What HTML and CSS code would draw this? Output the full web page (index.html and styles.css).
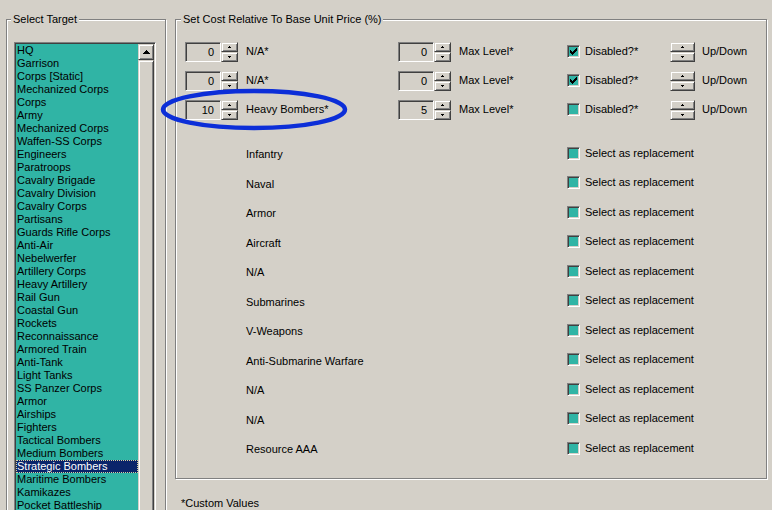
FILE: index.html
```html
<!DOCTYPE html>
<html>
<head>
<meta charset="utf-8">
<link rel="stylesheet" href="styles.css">
</head>
<body>
<div class="window">
  <fieldset class="group target">
    <legend>Select Target</legend>
    <div class="listbox">
      <ul class="items">
        <li>HQ</li><li>Garrison</li><li>Corps [Static]</li><li>Mechanized Corps</li><li>Corps</li><li>Army</li><li>Mechanized Corps</li><li>Waffen-SS Corps</li><li>Engineers</li><li>Paratroops</li><li>Cavalry Brigade</li><li>Cavalry Division</li><li>Cavalry Corps</li><li>Partisans</li><li>Guards Rifle Corps</li><li>Anti-Air</li><li>Nebelwerfer</li><li>Artillery Corps</li><li>Heavy Artillery</li><li>Rail Gun</li><li>Coastal Gun</li><li>Rockets</li><li>Reconnaissance</li><li>Armored Train</li><li>Anti-Tank</li><li>Light Tanks</li><li>SS Panzer Corps</li><li>Armor</li><li>Airships</li><li>Fighters</li><li>Tactical Bombers</li><li>Medium Bombers</li><li class="sel">Strategic Bombers</li><li>Maritime Bombers</li><li>Kamikazes</li><li>Pocket Battleship</li><li>Battleship</li>
      </ul>
      <div class="vscroll">
        <div class="sbtn"><svg width="7" height="4" viewBox="0 0 7 4" shape-rendering="crispEdges"><path d="M3 0h1v1h1v1h1v1h1v1H0V3h1V2h1V1h1z"/></svg></div>
        <div class="thumb"></div>
      </div>
    </div>
  </fieldset>

  <div class="main">
    <fieldset class="group cost">
      <legend>Set Cost Relative To Base Unit Price (%)</legend>

      <div class="upper">
        <div class="row">
          <div class="spin"><div class="edit">0</div><div class="btns"><div class="btn"><svg width="3" height="2" viewBox="0 0 3 2" shape-rendering="crispEdges"><path d="M1 0h1v1h1v1H0V1h1z"/></svg></div><div class="btn"><svg width="3" height="2" viewBox="0 0 3 2" shape-rendering="crispEdges"><path d="M0 0h3v1H2v1H1V1H0z"/></svg></div></div></div>
          <span class="lbl">N/A*</span>
          <div class="spin"><div class="edit">0</div><div class="btns"><div class="btn"><svg width="3" height="2" viewBox="0 0 3 2" shape-rendering="crispEdges"><path d="M1 0h1v1h1v1H0V1h1z"/></svg></div><div class="btn"><svg width="3" height="2" viewBox="0 0 3 2" shape-rendering="crispEdges"><path d="M0 0h3v1H2v1H1V1H0z"/></svg></div></div></div>
          <span class="lbl2">Max Level*</span>
          <div class="chkcell"><span class="chk"><svg width="7" height="7" viewBox="0 0 7 7" shape-rendering="crispEdges"><path d="M6 0h1v1h-1z M5 1h2v1h-2z M0 2h1v1h-1z M4 2h3v1h-3z M0 3h2v1h-2z M3 3h3v1h-3z M0 4h5v1h-5z M1 5h3v1h-3z M2 6h1v1h-1z"/></svg></span><span class="chklbl">Disabled?*</span></div>
          <div class="updown"><div class="btn"><svg width="3" height="2" viewBox="0 0 3 2" shape-rendering="crispEdges"><path d="M1 0h1v1h1v1H0V1h1z"/></svg></div><div class="btn"><svg width="3" height="2" viewBox="0 0 3 2" shape-rendering="crispEdges"><path d="M0 0h3v1H2v1H1V1H0z"/></svg></div></div>
          <span class="udlbl">Up/Down</span>
        </div>

        <div class="row">
          <div class="spin"><div class="edit">0</div><div class="btns"><div class="btn"><svg width="3" height="2" viewBox="0 0 3 2" shape-rendering="crispEdges"><path d="M1 0h1v1h1v1H0V1h1z"/></svg></div><div class="btn"><svg width="3" height="2" viewBox="0 0 3 2" shape-rendering="crispEdges"><path d="M0 0h3v1H2v1H1V1H0z"/></svg></div></div></div>
          <span class="lbl">N/A*</span>
          <div class="spin"><div class="edit">0</div><div class="btns"><div class="btn"><svg width="3" height="2" viewBox="0 0 3 2" shape-rendering="crispEdges"><path d="M1 0h1v1h1v1H0V1h1z"/></svg></div><div class="btn"><svg width="3" height="2" viewBox="0 0 3 2" shape-rendering="crispEdges"><path d="M0 0h3v1H2v1H1V1H0z"/></svg></div></div></div>
          <span class="lbl2">Max Level*</span>
          <div class="chkcell"><span class="chk"><svg width="7" height="7" viewBox="0 0 7 7" shape-rendering="crispEdges"><path d="M6 0h1v1h-1z M5 1h2v1h-2z M0 2h1v1h-1z M4 2h3v1h-3z M0 3h2v1h-2z M3 3h3v1h-3z M0 4h5v1h-5z M1 5h3v1h-3z M2 6h1v1h-1z"/></svg></span><span class="chklbl">Disabled?*</span></div>
          <div class="updown"><div class="btn"><svg width="3" height="2" viewBox="0 0 3 2" shape-rendering="crispEdges"><path d="M1 0h1v1h1v1H0V1h1z"/></svg></div><div class="btn"><svg width="3" height="2" viewBox="0 0 3 2" shape-rendering="crispEdges"><path d="M0 0h3v1H2v1H1V1H0z"/></svg></div></div>
          <span class="udlbl">Up/Down</span>
        </div>

        <div class="row">
          <div class="spin"><div class="edit">10</div><div class="btns"><div class="btn"><svg width="3" height="2" viewBox="0 0 3 2" shape-rendering="crispEdges"><path d="M1 0h1v1h1v1H0V1h1z"/></svg></div><div class="btn"><svg width="3" height="2" viewBox="0 0 3 2" shape-rendering="crispEdges"><path d="M0 0h3v1H2v1H1V1H0z"/></svg></div></div></div>
          <span class="lbl">Heavy Bombers*</span>
          <div class="spin"><div class="edit">5</div><div class="btns"><div class="btn"><svg width="3" height="2" viewBox="0 0 3 2" shape-rendering="crispEdges"><path d="M1 0h1v1h1v1H0V1h1z"/></svg></div><div class="btn"><svg width="3" height="2" viewBox="0 0 3 2" shape-rendering="crispEdges"><path d="M0 0h3v1H2v1H1V1H0z"/></svg></div></div></div>
          <span class="lbl2">Max Level*</span>
          <div class="chkcell"><span class="chk"></span><span class="chklbl">Disabled?*</span></div>
          <div class="updown"><div class="btn"><svg width="3" height="2" viewBox="0 0 3 2" shape-rendering="crispEdges"><path d="M1 0h1v1h1v1H0V1h1z"/></svg></div><div class="btn"><svg width="3" height="2" viewBox="0 0 3 2" shape-rendering="crispEdges"><path d="M0 0h3v1H2v1H1V1H0z"/></svg></div></div>
          <span class="udlbl">Up/Down</span>
        </div>
      </div>

      <div class="lower">
        <div class="row2"><span class="rlbl">Infantry</span><div class="chkcell"><span class="chk"></span><span class="chklbl">Select as replacement</span></div></div>
        <div class="row2"><span class="rlbl">Naval</span><div class="chkcell"><span class="chk"></span><span class="chklbl">Select as replacement</span></div></div>
        <div class="row2"><span class="rlbl">Armor</span><div class="chkcell"><span class="chk"></span><span class="chklbl">Select as replacement</span></div></div>
        <div class="row2"><span class="rlbl">Aircraft</span><div class="chkcell"><span class="chk"></span><span class="chklbl">Select as replacement</span></div></div>
        <div class="row2"><span class="rlbl">N/A</span><div class="chkcell"><span class="chk"></span><span class="chklbl">Select as replacement</span></div></div>
        <div class="row2"><span class="rlbl">Submarines</span><div class="chkcell"><span class="chk"></span><span class="chklbl">Select as replacement</span></div></div>
        <div class="row2"><span class="rlbl">V-Weapons</span><div class="chkcell"><span class="chk"></span><span class="chklbl">Select as replacement</span></div></div>
        <div class="row2"><span class="rlbl">Anti-Submarine Warfare</span><div class="chkcell"><span class="chk"></span><span class="chklbl">Select as replacement</span></div></div>
        <div class="row2"><span class="rlbl">N/A</span><div class="chkcell"><span class="chk"></span><span class="chklbl">Select as replacement</span></div></div>
        <div class="row2"><span class="rlbl">N/A</span><div class="chkcell"><span class="chk"></span><span class="chklbl">Select as replacement</span></div></div>
        <div class="row2"><span class="rlbl">Resource AAA</span><div class="chkcell"><span class="chk"></span><span class="chklbl">Select as replacement</span></div></div>
      </div>
    </fieldset>
    <div class="note">*Custom Values</div>
  </div>

  <svg class="annot" width="196" height="48" viewBox="0 0 196 48"><ellipse cx="98" cy="23.5" rx="91" ry="18.5" fill="none" stroke="#0c2ed8" stroke-width="4.5"/></svg>
</div>
</body>
</html>
```

FILE: styles.css
```css
* { box-sizing: border-box; }
html, body { margin: 0; padding: 0; }
body {
  background: #d4d0c8;
  color: #000;
  font: 11px/13px "Liberation Sans", Arial, sans-serif;
  overflow: hidden;
  width: 772px;
  height: 510px;
}
.window {
  position: relative;
  display: flex;
  align-items: flex-start;
  gap: 9px;
  padding-left: 6px;
  height: 510px;
  overflow: hidden;
}
.group {
  margin: 13px 0 0;
  padding: 0;
  min-width: 0;
  border: 1px solid #808080;
  box-shadow: inset 1px 1px 0 #fff, 1px 1px 0 #fff;
}
.group legend {
  padding: 0 2px;
  background: #d4d0c8;
  line-height: 13px;
}
.target { width: 160px; height: 620px; padding-top: 16px; flex: none; }
.target legend { margin-left: 4px; }

.listbox {
  margin-left: 7px;
  width: 142px;
  height: 580px;
  display: flex;
  padding: 1px;
  border: 1px solid;
  border-color: #808080 #fff #fff #808080;
  box-shadow: inset 1px 1px 0 #404040, inset -1px -1px 0 #d4d0c8;
}
.items {
  list-style: none;
  margin: 0;
  padding: 0;
  width: 122px;
  background: #30b4a5;
  overflow: hidden;
}
.items li { height: 13px; line-height: 13px; padding-left: 1px; white-space: nowrap; }
.items li.sel {
  background: #0a246a;
  color: #fff;
  outline: 1px dotted #d8d0a0;
  outline-offset: -1px;
}
.vscroll {
  width: 16px;
  display: flex;
  flex-direction: column;
  background: #e4e2dd;
}
.sbtn, .thumb, .btn {
  background: #d4d0c8;
  border: 1px solid;
  border-color: #d4d0c8 #404040 #404040 #d4d0c8;
  box-shadow: inset 1px 1px 0 #fff, inset -1px -1px 0 #808080;
}
.sbtn { height: 16px; display: flex; align-items: center; justify-content: center; }
.thumb { flex: 1; }

.main { display: flex; flex-direction: column; flex: none; }
.cost { width: 592px; height: 466px; padding: 11px 0 0 0; }
.cost legend { margin-left: 5px; }
.upper, .lower { padding-left: 9px; }

.row { display: flex; align-items: center; height: 29px; }
.spin { display: flex; width: 53px; height: 20px; flex: none; }
.edit {
  width: 36px;
  height: 20px;
  border: 1px solid;
  border-color: #808080 #fff #fff #808080;
  box-shadow: inset 1px 1px 0 #404040;
  text-align: right;
  padding-right: 6px;
  line-height: 18px;
}
.btns, .updown { display: flex; flex-direction: column; }
.btns { width: 17px; }
.btn { flex: 1; display: flex; align-items: center; justify-content: center; }
.lbl { margin-left: 8px; width: 152px; flex: none; }
.lbl2 { margin-left: 8px; width: 108px; flex: none; }
.chkcell { display: flex; align-items: center; width: 103px; flex: none; }
.chk {
  width: 13px;
  height: 13px;
  flex: none;
  display: flex;
  align-items: center;
  justify-content: center;
  background: #30b4a5;
  border: 1px solid;
  border-color: #808080 #fff #fff #808080;
  box-shadow: inset 1px 1px 0 #404040, inset -1px -1px 0 #d4d0c8;
}
.chklbl { margin-left: 5px; white-space: nowrap; }
.updown { width: 25px; height: 20px; flex: none; }
.udlbl { margin-left: 7px; }

.lower { margin-top: 16px; }
.row2 { display: flex; align-items: center; height: 29.5px; }
.rlbl { margin-left: 61px; width: 321px; flex: none; }
.row2 .chkcell { margin-bottom: 3px; width: 160px; }

.note { margin: 18px 0 0 6px; }

.annot { position: absolute; left: 156px; top: 86px; }
```
